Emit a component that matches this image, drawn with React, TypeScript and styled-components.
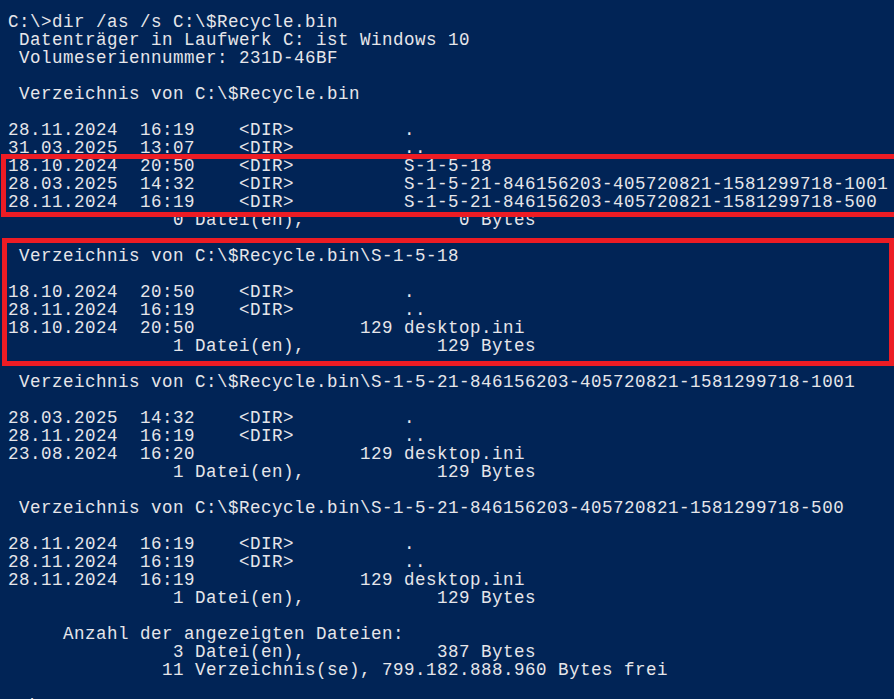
import React from "react";
import styled, { createGlobalStyle } from "styled-components";

const Global = createGlobalStyle`
  html, body {
    margin: 0;
    padding: 0;
    background: #012456;
    overflow: hidden;
  }
`;

const Terminal = styled.main`
  width: 894px;
  height: 699px;
  box-sizing: border-box;
  padding: 13px 0 0 8px;
  background: #012456;
  color: #e6e6ea;
  font-family: "Liberation Mono", "DejaVu Sans Mono", monospace;
  font-size: 17.5px;
  letter-spacing: 0.5px;
  line-height: 18px;
  overflow: hidden;
  position: relative;
`;

const Line = styled.div`
  white-space: pre;
  height: 18px;
`;

type Box = { $top: number; $bottom: number; $left: number; $right: number };

const Marked = styled.section<Box>`
  position: relative;
  &::after {
    content: "";
    position: absolute;
    top: ${(p) => -p.$top}px;
    bottom: ${(p) => -p.$bottom}px;
    left: ${(p) => -p.$left}px;
    right: ${(p) => -p.$right}px;
    border: 5px solid #ed1c24;
    pointer-events: none;
  }
`;

const SID1001 = "S-1-5-21-846156203-405720821-1581299718-1001";
const SID500 = "S-1-5-21-846156203-405720821-1581299718-500";

const dir = (date: string, time: string, name: string) =>
  `${date}  ${time}    <DIR>          ${name}`;
const file = (date: string, time: string, size: string, name: string) =>
  `${date}  ${time}${size.padStart(18, " ")} ${name}`;
const files = (n: string, bytes: string) =>
  `${n.padStart(16, " ")} Datei(en),${bytes.padStart(15, " ")} Bytes`;
const head = (path: string) => ` Verzeichnis von ${path}`;

const Lines = ({ items }: { items: string[] }) => (
  <>
    {items.map((t, i) => (
      <Line key={i}>{t === "" ? "\u00a0" : t}</Line>
    ))}
  </>
);

export default function App() {
  const root = "C:\\$Recycle.bin";
  return (
    <>
      <Global />
      <Terminal>
        <Lines
          items={[
            "C:\\>dir /as /s C:\\$Recycle.bin",
            " Datenträger in Laufwerk C: ist Windows 10",
            " Volumeseriennummer: 231D-46BF",
            "",
            head(root),
            "",
            dir("28.11.2024", "16:19", "."),
            dir("31.03.2025", "13:07", ".."),
          ]}
        />
        <Marked $top={3} $bottom={6} $left={7} $right={30}>
          <Lines
            items={[
              dir("18.10.2024", "20:50", "S-1-5-18"),
              dir("28.03.2025", "14:32", SID1001),
              dir("28.11.2024", "16:19", SID500),
            ]}
          />
        </Marked>
        <Lines items={[files("0", "0"), ""]} />
        <Marked $top={9} $bottom={11} $left={6} $right={0}>
          <Lines
            items={[
              head(root + "\\S-1-5-18"),
              "",
              dir("18.10.2024", "20:50", "."),
              dir("28.11.2024", "16:19", ".."),
              file("18.10.2024", "20:50", "129", "desktop.ini"),
              files("1", "129"),
            ]}
          />
        </Marked>
        <Lines
          items={[
            "",
            head(root + "\\" + SID1001),
            "",
            dir("28.03.2025", "14:32", "."),
            dir("28.11.2024", "16:19", ".."),
            file("23.08.2024", "16:20", "129", "desktop.ini"),
            files("1", "129"),
            "",
            head(root + "\\" + SID500),
            "",
            dir("28.11.2024", "16:19", "."),
            dir("28.11.2024", "16:19", ".."),
            file("28.11.2024", "16:19", "129", "desktop.ini"),
            files("1", "129"),
            "",
            "     Anzahl der angezeigten Dateien:",
            files("3", "387"),
            "              11 Verzeichnis(se), 799.182.888.960 Bytes frei",
            "",
            "C:\\>",
          ]}
        />
      </Terminal>
    </>
  );
}
